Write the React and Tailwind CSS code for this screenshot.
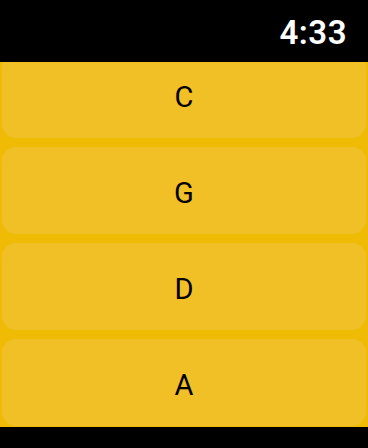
// Watch-style list of chord buttons under a status bar

const notes = ['C', 'G', 'D', 'A'];

export default function App() {
  return (
    <div
      className="w-[368px] h-[448px] bg-black flex flex-col overflow-hidden"
      style={{ fontFamily: 'Roboto, "Noto Sans", sans-serif' }}
    >
      {/* Status bar */}
      <div className="h-[62px] shrink-0 flex items-center justify-end pr-[21px] pt-[2px]">
        <span className="text-white text-[33px] font-semibold leading-none tracking-[0.5px]">4:33</span>
      </div>

      {/* Scrolling list */}
      <div className="h-[365px] shrink-0 bg-[#f0bb05] overflow-hidden px-[2px]">
        <div className="flex flex-col gap-[9px] -mt-[11px]">
          {notes.map((n) => (
            <button
              key={n}
              className="h-[87px] w-full rounded-[14px] bg-[#f1bf26] flex items-center justify-center pt-[5px] text-black text-[29px] leading-none"
            >
              {n}
            </button>
          ))}
        </div>
      </div>
    </div>
  );
}
